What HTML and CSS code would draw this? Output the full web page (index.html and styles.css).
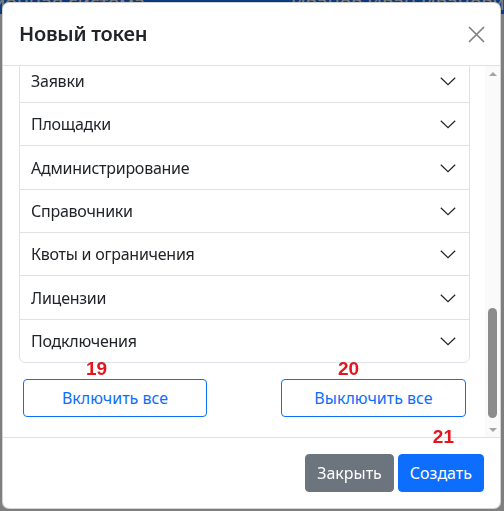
FILE: index.html
```html
<!DOCTYPE html>
<html lang="ru">
<head>
<meta charset="utf-8">
<title>Новый токен</title>
<link rel="stylesheet" href="styles.css">
</head>
<body>
<header class="navbar">
  <span class="brand">Информационная система</span>
  <span class="user">Иванов Иван Иванович</span>
</header>
<div class="backdrop"></div>
<div class="modal" role="dialog">
  <div class="modal-header">
    <h5 class="modal-title">Новый токен</h5>
    <button class="btn-close" aria-label="Закрыть">
      <svg width="17" height="17" viewBox="0 0 17 17"><path d="M1 1 16 16M16 1 1 16" fill="none" stroke="#7f7f7f" stroke-width="1.6"/></svg>
    </button>
  </div>
  <div class="modal-body">
    <div class="body-scroll">
      <div class="body-inner">
        <div class="accordion">
          <div class="acc-item"><span>Заявки</span><svg class="chev" width="16" height="16" viewBox="0 0 16 16"><path d="M0.8 4.8 8 11.6 15.2 4.8" fill="none" stroke="#212529" stroke-width="1.2"/></svg></div>
          <div class="acc-item"><span>Площадки</span><svg class="chev" width="16" height="16" viewBox="0 0 16 16"><path d="M0.8 4.8 8 11.6 15.2 4.8" fill="none" stroke="#212529" stroke-width="1.2"/></svg></div>
          <div class="acc-item"><span>Администрирование</span><svg class="chev" width="16" height="16" viewBox="0 0 16 16"><path d="M0.8 4.8 8 11.6 15.2 4.8" fill="none" stroke="#212529" stroke-width="1.2"/></svg></div>
          <div class="acc-item"><span>Справочники</span><svg class="chev" width="16" height="16" viewBox="0 0 16 16"><path d="M0.8 4.8 8 11.6 15.2 4.8" fill="none" stroke="#212529" stroke-width="1.2"/></svg></div>
          <div class="acc-item"><span>Квоты и ограничения</span><svg class="chev" width="16" height="16" viewBox="0 0 16 16"><path d="M0.8 4.8 8 11.6 15.2 4.8" fill="none" stroke="#212529" stroke-width="1.2"/></svg></div>
          <div class="acc-item"><span>Лицензии</span><svg class="chev" width="16" height="16" viewBox="0 0 16 16"><path d="M0.8 4.8 8 11.6 15.2 4.8" fill="none" stroke="#212529" stroke-width="1.2"/></svg></div>
          <div class="acc-item"><span>Подключения</span><svg class="chev" width="16" height="16" viewBox="0 0 16 16"><path d="M0.8 4.8 8 11.6 15.2 4.8" fill="none" stroke="#212529" stroke-width="1.2"/></svg></div>
        </div>
        <div class="toggle-row">
          <div class="tag-wrap">
            <button class="btn btn-outline btn-on">Включить все</button>
            <span class="tag tag-19">19</span>
          </div>
          <div class="tag-wrap">
            <button class="btn btn-outline btn-off">Выключить все</button>
            <span class="tag tag-20">20</span>
          </div>
        </div>
      </div>
    </div>
    <div class="scrollbar" aria-hidden="true">
      <div class="sb-arrow sb-up"></div>
      <div class="sb-track"><div class="sb-thumb"></div></div>
      <div class="sb-arrow sb-down"></div>
    </div>
  </div>
  <div class="modal-footer">
    <button class="btn btn-secondary">Закрыть</button>
    <div class="tag-wrap">
      <button class="btn btn-primary">Создать</button>
      <span class="tag tag-21">21</span>
    </div>
  </div>
</div>
</body>
</html>
```

FILE: styles.css
```css
* { box-sizing: border-box; }
html, body { margin: 0; height: 100%; }
body {
  font-family: "Noto Sans", "Open Sans", sans-serif;
  font-size: 16px;
  line-height: 1.5;
  letter-spacing: -0.25px;
  color: #212529;
  background: #fff;
  overflow: hidden;
}
.navbar {
  height: 14px;
  background: #1677ff;
  color: #fff;
  display: flex;
  justify-content: space-between;
  overflow: hidden;
  font-size: 20px;
  line-height: 6px;
}
.brand { margin-left: -110px; }
.user { margin-right: -12px; }
.backdrop {
  position: fixed;
  inset: 0;
  background: rgba(0, 0, 0, 0.5);
}
.modal {
  position: fixed;
  left: 2px;
  top: 2px;
  width: 499px;
  height: 507px;
  background: #fff;
  border: 1px solid rgba(0, 0, 0, 0.175);
  border-radius: 7px;
  display: flex;
  flex-direction: column;
  overflow: hidden;
}
.modal-header {
  flex: none;
  display: flex;
  align-items: center;
  padding: 16px 15px 16px 16px;
  border-bottom: 1px solid #dee2e6;
}
.modal-title {
  margin: 0;
  font-size: 20px;
  font-weight: 600;
  line-height: 30px;
}
.btn-close {
  margin-left: auto;
  padding: 0;
  border: 0;
  background: none;
  width: 17px;
  height: 17px;
  display: block;
  cursor: pointer;
}
.btn-close svg { display: block; }
.modal-body {
  flex: 1;
  min-height: 0;
  display: flex;
}
.body-scroll {
  flex: 1;
  min-width: 0;
  overflow: hidden;
  display: flex;
  flex-direction: column-reverse;
}
.body-inner {
  padding: 16px 15px 20px 16px;
}
.accordion {
  border: 1px solid #dee2e6;
  border-radius: 6px;
}
.acc-item {
  height: 43.33px;
  display: flex;
  align-items: center;
  justify-content: space-between;
  padding: 0 13px 0 11px;
  border-top: 1px solid #dee2e6;
}
.acc-item:first-child { border-top: 0; height: 42.33px; }
.chev { display: block; flex: none; }
.toggle-row {
  margin-top: 16px;
  display: flex;
  justify-content: space-between;
  padding: 0 4px;
}
.tag-wrap { position: relative; }
.btn {
  display: block;
  height: 38px;
  padding: 6px 12px;
  font: inherit;
  line-height: 24px;
  border: 1px solid transparent;
  border-radius: 4px;
  cursor: pointer;
}
.btn-outline {
  color: #0d6efd;
  border-color: #0d6efd;
  background: #fff;
}
.btn-on { width: 184px; }
.btn-off { width: 185px; }
.btn-secondary { background: #6c757d; color: #fff; border-color: #6c757d; padding: 6px 11px; }
.btn-primary { background: #0d6efd; color: #fff; border-color: #0d6efd; padding: 6px 11px; }
.modal-footer {
  flex: none;
  display: flex;
  justify-content: flex-end;
  align-items: center;
  gap: 4px;
  padding: 16px 16px 16px 12px;
  border-top: 1px solid #dee2e6;
}
.scrollbar {
  flex: none;
  width: 15px;
  display: flex;
  flex-direction: column;
  background: #fafafa;
}
.sb-arrow {
  flex: none;
  height: 15px;
  display: flex;
  align-items: center;
  justify-content: center;
}
.sb-up::before,
.sb-down::before {
  content: "";
  width: 0;
  height: 0;
  border-left: 4px solid transparent;
  border-right: 4px solid transparent;
}
.sb-up::before { border-bottom: 4px solid #a3a3a3; }
.sb-down::before { border-top: 4px solid #a3a3a3; }
.sb-track {
  flex: 1;
  display: flex;
  flex-direction: column;
  justify-content: flex-end;
  align-items: center;
  padding-bottom: 4px;
}
.sb-thumb {
  width: 9px;
  height: 110px;
  border-radius: 5px;
  background: #8c8c8c;
}
.tag {
  position: absolute;
  font-family: "Liberation Sans", Arial, sans-serif;
  font-weight: 700;
  font-size: 19px;
  line-height: 1;
  letter-spacing: 0;
  color: #e3161e;
}
.tag-19 { left: 63px; top: -20px; }
.tag-20 { left: 57px; top: -20px; }
.tag-21 { left: 35px; top: -27px; }
```
